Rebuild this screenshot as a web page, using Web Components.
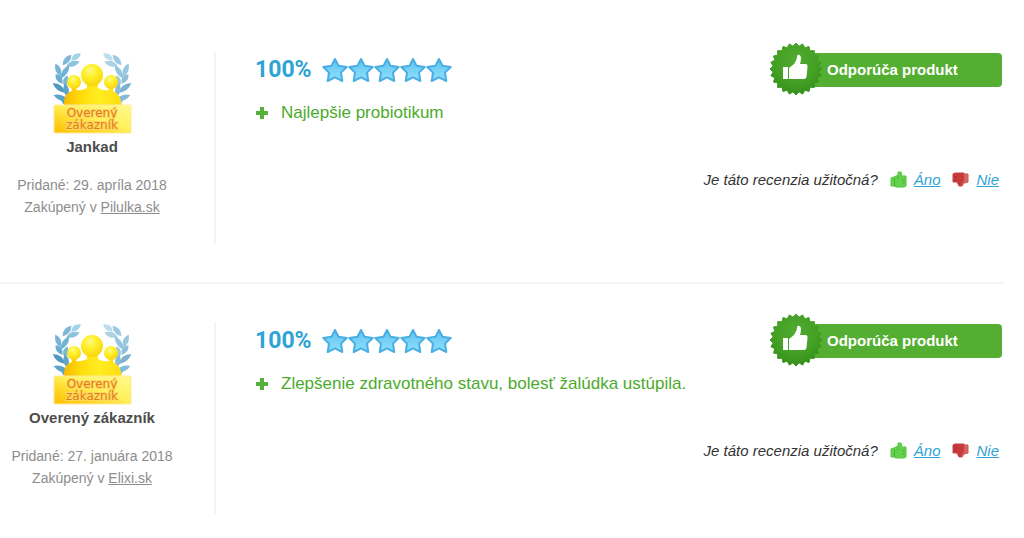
<!DOCTYPE html>
<html lang="sk">
<head>
<meta charset="utf-8">
<meta name="viewport" content="width=device-width, initial-scale=1">
<title>Recenzie</title>
<style>
body {
  margin: 0;
  background: #fff;
  color: #333;
  font-family: "Liberation Sans", Arial, sans-serif;
}
</style>
</head>
<body>

<review-list>
  <customer-review author="Jankad" date="29. apríla 2018" shop="Pilulka.sk" rating="100">Najlepšie probiotikum</customer-review>
  <customer-review author="Overený zákazník" date="27. januára 2018" shop="Elixi.sk" rating="100">Zlepšenie zdravotného stavu, bolesť žalúdka ustúpila.</customer-review>
</review-list>

<script>
"use strict";

function attach(element, html) {
  const template = document.createElement("template");
  template.innerHTML = html;
  element.attachShadow({ mode: "open" }).appendChild(template.content.cloneNode(true));
}

/**
 * Column of reviews.
 */
class ReviewList extends HTMLElement {
  constructor() {
    super();
    attach(this, `
<style>
:host {
  display: flex;
  flex-direction: column;
  padding-top: 13px;
  margin-right: 20px;
}
</style>
<slot></slot>
`);
  }
}

/**
 * Picture of a verified customer: laurel, three people and a plate.
 */
class VerifiedBadge extends HTMLElement {
  constructor() {
    super();
    // Leaves of the left branch: x, y, angle, half length, colour
    const leaves = [
      [24, 5, -35, 6, "#a5d3ea"], [15, 8, -50, 7, "#7db8d8"],
      [21, 12, -18, 7, "#8dc3df"], [6, 18, 68, 7, "#78b5d6"],
      [13, 20, -58, 8, "#6fb2d5"], [7, 27, 55, 6, "#68acd0"],
      [14, 29, -75, 6, "#7ab7d8"], [7, 36, 38, 8, "#5199c0"],
      [14, 38, 80, 7, "#5fa5cb"], [9, 46, 22, 8, "#5ba5cc"],
      [13, 50, 40, 5, "#5ba5cc"],
    ];
    const branch = leaves.map(([x, y, angle, length, fill]) =>
      `<path transform="translate(${x} ${y}) rotate(${angle})" fill="${fill}" d="M-${length} 0Q0-6 ${length} 0Q0 5-${length} 0Z"/>`
    ).join("");
    attach(this, `
<style>
:host {
  display: block;
  width: 80px;
}
svg {
  display: block;
  width: 100%;
}
text {
  font: 12px "DejaVu Sans", Verdana, sans-serif;
  fill: #e07d14;
  stroke: #ffd765;
  stroke-width: 2px;
  stroke-linejoin: round;
  paint-order: stroke;
}
</style>
<svg viewBox="0 0 80 84" role="img" aria-label="Overený zákazník">
  <defs>
    <radialGradient id="head" cx=".42" cy=".3" r=".75">
      <stop offset="0" stop-color="#fff98a"/><stop offset=".4" stop-color="#fff02a"/><stop offset="1" stop-color="#f9d208"/>
    </radialGradient>
    <linearGradient id="people" x1="0" y1="0" x2="1" y2="0">
      <stop offset="0" stop-color="#f8b800"/><stop offset=".3" stop-color="#ffdd0a"/><stop offset=".6" stop-color="#ffed20"/><stop offset="1" stop-color="#ffdc10"/>
    </linearGradient>
    <linearGradient id="plate" x1="0" y1="1" x2="1" y2="0">
      <stop offset="0" stop-color="#ffbd00"/><stop offset=".35" stop-color="#ffdd30"/><stop offset=".55" stop-color="#fff15c"/><stop offset="1" stop-color="#fff98d"/>
    </linearGradient>
  </defs>
  <g>${branch}</g>
  <g transform="matrix(-1 0 0 1 80 0)" opacity=".75">${branch}</g>
  <path fill="url(#people)" d="M12 55Q11 41 20 39L19 33H25L24 38Q29 39 35 36L35 31H46L46 36Q51 39 57 38L56 33H62L61 39Q69 42 70 55Z"/>
  <circle cx="22" cy="30" r="7" fill="url(#head)"/>
  <circle cx="59" cy="30" r="7" fill="url(#head)"/>
  <circle cx="40" cy="23" r="11" fill="url(#head)"/>
  <rect x="2" y="53" width="77" height="28" rx="1" fill="url(#plate)" stroke="#ffe9a0"/>
  <text x="40" y="65" text-anchor="middle">Overený</text>
  <text x="40" y="77" text-anchor="middle">zákazník</text>
</svg>
`);
  }
}

/**
 * Five stars in a row.
 */
class StarRating extends HTMLElement {
  constructor() {
    super();
    const star = `<svg viewBox="0 0 26 26" aria-hidden="true">
  <defs><linearGradient id="fill" x1="0" y1="0" x2="0" y2="1"><stop offset="0" stop-color="#5fc3f0"/><stop offset="1" stop-color="#8fe0fa"/></linearGradient></defs>
  <path d="M13 2L16.500 8.700L24.700 10L19 15.600L20.300 24L13 20.400L5.700 24L7 15.600L1.300 10L9.500 8.700Z" fill="url(#fill)" stroke="#48aee4" stroke-width="2" stroke-linejoin="round"/>
</svg>`;
    attach(this, `
<style>
:host {
  display: flex;
}
svg {
  width: 26px;
  height: 26px;
}
</style>
${star.repeat(5)}
`);
  }
}

/**
 * Green ribbon with a thumb seal.
 */
class RecommendRibbon extends HTMLElement {
  constructor() {
    super();
    const teeth = 24;
    const points = [];
    for (let i = 0; i < teeth * 2; i++) {
      const angle = Math.PI * i / teeth;
      const radius = i % 2 ? 23 : 26;
      points.push(`${(27 + radius * Math.cos(angle)).toFixed(1)},${(27 + radius * Math.sin(angle)).toFixed(1)}`);
    }
    attach(this, `
<style>
:host {
  display: flex;
  align-items: center;
  position: relative;
  box-sizing: border-box;
  width: 206px;
  height: 34px;
  padding-left: 31px;
  border-radius: 4px;
  background: #54ae31;
  color: #fff;
  font: bold 15px/34px "Liberation Sans", Arial, sans-serif;
}
svg {
  position: absolute;
  left: -27px;
  top: -11px;
  width: 54px;
  height: 54px;
}
</style>
<svg viewBox="0 0 54 54" aria-hidden="true">
  <defs><radialGradient id="seal" cx=".5" cy=".35" r=".65"><stop offset="0" stop-color="#50ab30"/><stop offset=".6" stop-color="#45a026"/><stop offset="1" stop-color="#35901a"/></radialGradient></defs>
  <polygon points="${points.join(" ")}" fill="url(#seal)" stroke="url(#seal)" stroke-linejoin="round"/>
  <path fill="#fff" d="M14 25H19V37H14ZM20 26L25 22Q28 18 28.500 13Q31.500 12 32 15.500Q32 19 31 22H37Q39 22.500 38.500 25L37.500 35Q37 37 35 37H20Z"/>
</svg>
<slot></slot>
`);
  }
}

/**
 * "Was this review useful?" with its two answers.
 */
class HelpfulVote extends HTMLElement {
  constructor() {
    super();
    attach(this, `
<style>
:host {
  display: flex;
  align-items: center;
  font-size: 15px;
  line-height: 20px;
  font-style: italic;
}
svg {
  width: 18px;
  height: 18px;
  margin: 0 6px 0 12px;
}
a {
  color: #2ea3d5;
}
</style>
<span>Je táto recenzia užitočná?</span>
<svg viewBox="0 0 18 18" aria-hidden="true"><path fill="#62d24e" stroke="#55c542" stroke-linejoin="round" d="M1 7L4 6L8 4L8 1H11L12 5H16V15L14 16H6L4 15H1Z"/><path stroke="#44b636" fill="none" d="M4.500 7V15M8 5V8M12 9H15M12 12H15"/></svg>
<a href="#ano">Áno</a>
<svg viewBox="0 0 18 18" aria-hidden="true"><path fill="#c53a3a" stroke="#c84545" stroke-linejoin="round" d="M1 3L3 2H12V12H10V15H7L5 11H1Z"/><path fill="#dc6660" stroke="#cc5050" stroke-linejoin="round" d="M12 3H16V11L12 12L10 15V12L13 9Z"/><path stroke="#ad2b30" fill="none" d="M2 6H5M2 9H5"/></svg>
<a href="#nie">Nie</a>
`);
  }
}

/**
 * One review: its author on the left, the rating and text on the right.
 */
class CustomerReview extends HTMLElement {
  constructor() {
    super();
    attach(this, `
<style>
:host {
  display: flex;
  padding: 39px 0 38px;
  border-bottom: 2px solid #f3f3f3;
}
:host(:last-of-type) {
  padding-bottom: 0;
  border-bottom: 0;
}
aside {
  display: flex;
  flex-direction: column;
  align-items: center;
  flex: 0 0 184px;
  min-height: 192px;
  padding-right: 30px;
  border-right: 2px solid #f3f3f3;
  color: #8d8d8d;
  font-size: 14px;
  line-height: 22px;
}
h3 {
  margin: 0 0 16px;
  color: #4d4d4d;
  font-size: 15px;
  line-height: 22px;
}
p {
  margin: 0;
}
aside a {
  color: inherit;
}
main {
  display: flex;
  flex-direction: column;
  flex: 1;
  padding-left: 39px;
}
header {
  display: flex;
  align-items: center;
  height: 36px;
}
.percent {
  margin-right: 10px;
  color: #2ea3d5;
  font: bold 23px/36px Roboto, sans-serif;
}
recommend-ribbon {
  margin-left: auto;
  margin-right: 2px;
}
.plus {
  display: flex;
  align-items: center;
  gap: 12px;
  margin-top: 14px;
  color: #4cab2c;
  font-size: 17px;
  line-height: 22px;
}
.plus svg {
  width: 14px;
  height: 14px;
}
helpful-vote {
  align-self: flex-end;
  margin: 46px 5px 0 0;
}
</style>
<aside>
  <verified-badge></verified-badge>
  <h3 id="author"></h3>
  <p>Pridané: <span id="date"></span></p>
  <p>Zakúpený v <a id="shop" href="#shop"></a></p>
</aside>
<main>
  <header>
    <span class="percent" id="percent"></span>
    <star-rating></star-rating>
    <recommend-ribbon>Odporúča produkt</recommend-ribbon>
  </header>
  <div class="plus">
    <svg viewBox="0 0 14 14" aria-hidden="true"><path fill="#58ae3a" d="M5 1H9V5H13V9H9V13H5V9H1V5H5Z"/></svg>
    <span><slot></slot></span>
  </div>
  <helpful-vote></helpful-vote>
</main>
`);
  }

  connectedCallback() {
    const root = this.shadowRoot;
    root.getElementById("author").textContent = this.getAttribute("author");
    root.getElementById("date").textContent = this.getAttribute("date");
    root.getElementById("shop").textContent = this.getAttribute("shop");
    root.getElementById("percent").textContent = `${this.getAttribute("rating")}%`;
  }
}

customElements.define("review-list", ReviewList);
customElements.define("verified-badge", VerifiedBadge);
customElements.define("star-rating", StarRating);
customElements.define("recommend-ribbon", RecommendRibbon);
customElements.define("helpful-vote", HelpfulVote);
customElements.define("customer-review", CustomerReview);
</script>
</body>
</html>
